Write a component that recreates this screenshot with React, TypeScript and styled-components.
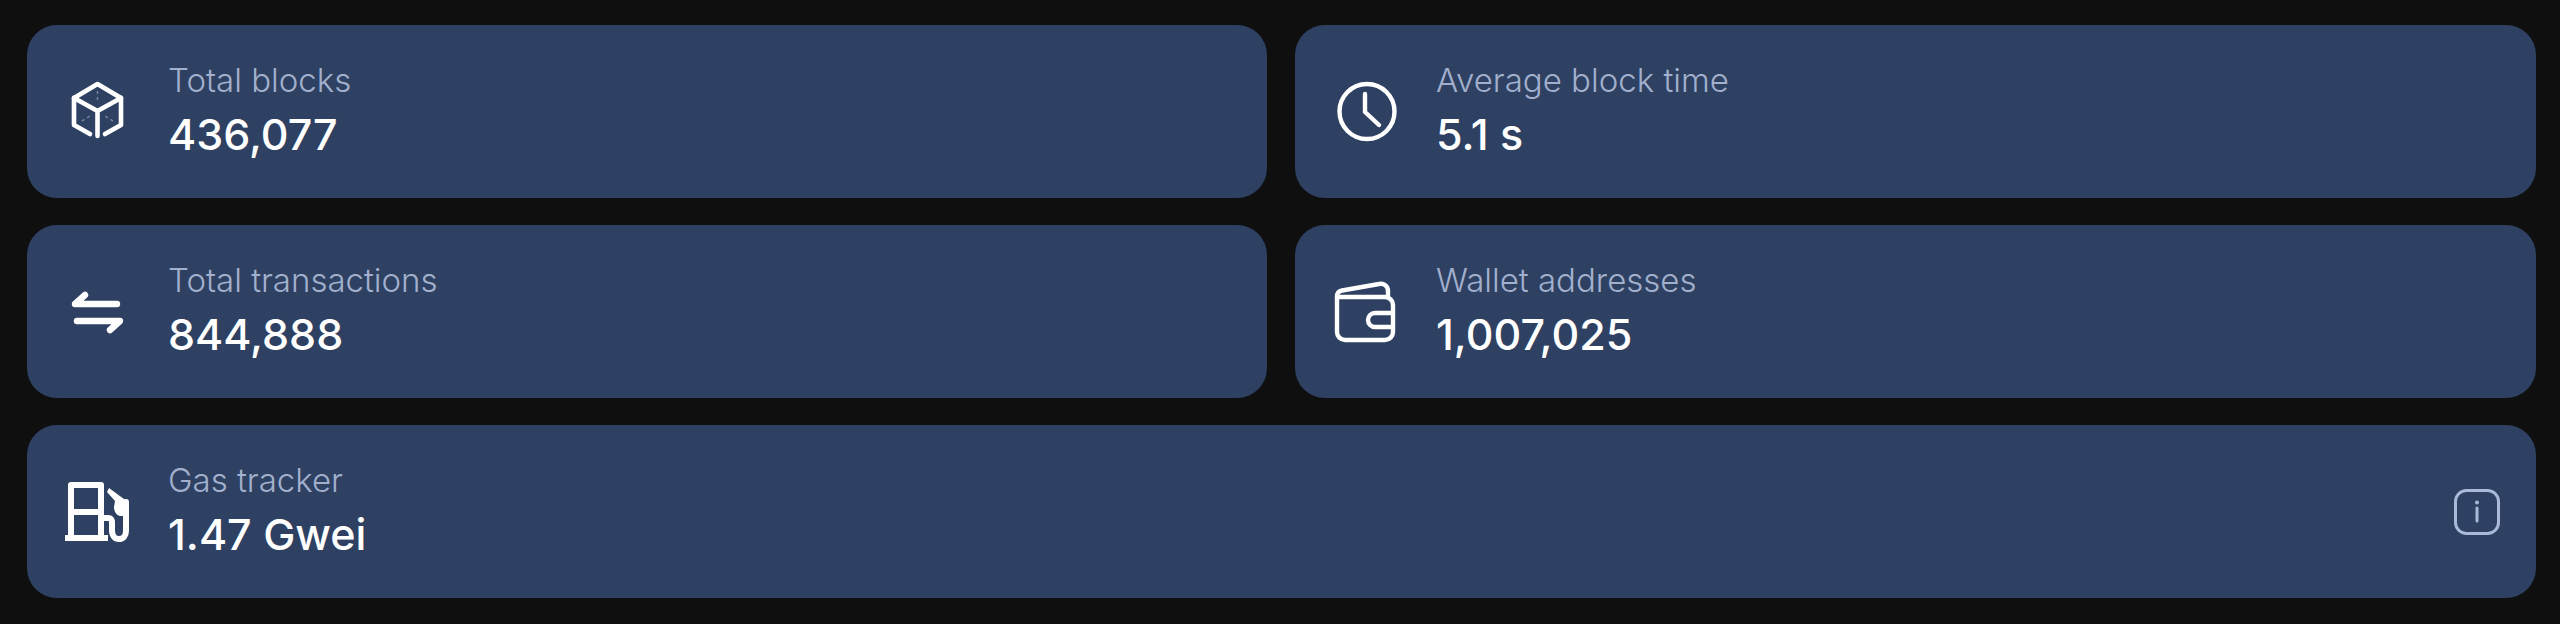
import styled, { createGlobalStyle } from "styled-components";
import { ReactElement } from "react";

const GlobalStyle = createGlobalStyle`
  html, body {
    margin: 0;
    padding: 0;
    background: #0f0f10;
  }
  body {
    font-family: Inter, "Liberation Sans", sans-serif;
  }
`;

const Page = styled.div`
  box-sizing: border-box;
  width: 2560px;
  height: 624px;
  padding: 25px 24px 26px 27px;
  background: #0f0f10;
`;

const Grid = styled.div`
  display: grid;
  grid-template-columns: 1240px 1241px;
  grid-auto-rows: 173px;
  column-gap: 28px;
  row-gap: 27px;
`;

const Card = styled.div<{ $wide?: boolean }>`
  display: flex;
  align-items: center;
  gap: 37px;
  padding: 0 36px 0 37px;
  border-radius: 30px;
  background: #2e4162;
  grid-column: ${(p) => (p.$wide ? "1 / -1" : "auto")};
`;

const IconBox = styled.svg`
  flex: none;
  display: block;
  width: 67px;
  height: 67px;
  color: #ffffff;
`;

const Texts = styled.div`
  display: flex;
  flex-direction: column;
  gap: 10px;
  padding-bottom: 5px;
`;

const Label = styled.div`
  font-size: 33px;
  line-height: 40px;
  font-weight: 300;
  color: #a2b0cd;
`;

const Value = styled.div`
  font-size: 43px;
  line-height: 48px;
  font-weight: 500;
  color: #ffffff;
`;

const InfoButton = styled.svg`
  flex: none;
  display: block;
  width: 46px;
  height: 46px;
  margin-left: auto;
  color: #a8bad8;
`;

function CubeIcon() {
  return (
    <IconBox viewBox="0 0 67 67" fill="none" stroke="currentColor">
      <g strokeWidth="4.6" strokeLinecap="round" strokeLinejoin="round">
        <path d="M26 56 L10 47 V20 L33.5 6 L57 20 V47 L41 56" />
        <path d="M10 20 L33.5 33 L57 20 M33.5 33 V58" />
      </g>
      <path
        d="M33.5 13 V25 M18 43 L26 38 M49 43 L41 38"
        strokeWidth="1.5"
        strokeDasharray="3 3"
        opacity="0.35"
      />
    </IconBox>
  );
}

function ClockIcon() {
  return (
    <IconBox viewBox="0 0 67 67" fill="none" stroke="currentColor">
      <circle cx="35" cy="33.5" r="27.5" strokeWidth="4.4" />
      <path
        d="M33 16 V34 L47 47"
        strokeWidth="4.4"
        strokeLinecap="round"
        strokeLinejoin="round"
      />
    </IconBox>
  );
}

function SwapIcon() {
  return (
    <IconBox viewBox="0 0 67 67" fill="none" stroke="currentColor">
      <path
        d="M53 26 H11 L21 17 M13 43 H56 L46 52"
        strokeWidth="6.4"
        strokeLinecap="round"
        strokeLinejoin="round"
      />
    </IconBox>
  );
}

function WalletIcon() {
  return (
    <IconBox viewBox="0 0 67 67" fill="none" stroke="currentColor">
      <g strokeWidth="4.4" strokeLinecap="round" strokeLinejoin="round">
        <path d="M5 19 V54 A8 8 0 0 0 13 62 H53 A8 8 0 0 0 61 54 V27 A8 8 0 0 0 53 19 H5" />
        <path d="M5 19 C5 15 7 13 10 12.500 L47 6 C52 5 56 8 56 13 V19" />
        <path d="M61 35 H43 A7 7 0 0 0 43 49 H61" />
      </g>
    </IconBox>
  );
}

function GasIcon() {
  return (
    <IconBox viewBox="0 0 67 67" fill="none" stroke="currentColor">
      <g strokeWidth="6" strokeLinejoin="round">
        <path d="M7 59 V7 H37 V59" />
        <path d="M7 34 H37" />
        <path d="M1 60 H44" />
        <path d="M37 40 H44 C47 40 48 42 48 45 V52 C48 58 51 61 55 61 C59 61 62 58 62 53 V24" strokeLinecap="round" />
      </g>
      <path d="M45 10 L64 24 V38 H56 C52 37 50 33 50 29 L51 23 L43 14 Z" fill="currentColor" stroke="none" />
    </IconBox>
  );
}

function InfoIcon() {
  return (
    <InfoButton viewBox="0 0 46 46" fill="none" stroke="currentColor">
      <rect x="1.5" y="1.5" width="43" height="43" rx="11" strokeWidth="3" />
      <path d="M23 19 V32" strokeWidth="3" strokeLinecap="round" />
      <circle cx="23" cy="13.500" r="2" fill="currentColor" stroke="none" />
    </InfoButton>
  );
}

type Stat = {
  icon: ReactElement;
  label: string;
  value: string;
  wide?: boolean;
  info?: boolean;
};

const stats: Stat[] = [
  { icon: <CubeIcon />, label: "Total blocks", value: "436,077" },
  { icon: <ClockIcon />, label: "Average block time", value: "5.1 s" },
  { icon: <SwapIcon />, label: "Total transactions", value: "844,888" },
  { icon: <WalletIcon />, label: "Wallet addresses", value: "1,007,025" },
  { icon: <GasIcon />, label: "Gas tracker", value: "1.47 Gwei", wide: true, info: true },
];

export default function App() {
  return (
    <Page>
      <GlobalStyle />
      <Grid>
        {stats.map((s) => (
          <Card key={s.label} $wide={s.wide}>
            {s.icon}
            <Texts>
              <Label>{s.label}</Label>
              <Value>{s.value}</Value>
            </Texts>
            {s.info && <InfoIcon />}
          </Card>
        ))}
      </Grid>
    </Page>
  );
}
